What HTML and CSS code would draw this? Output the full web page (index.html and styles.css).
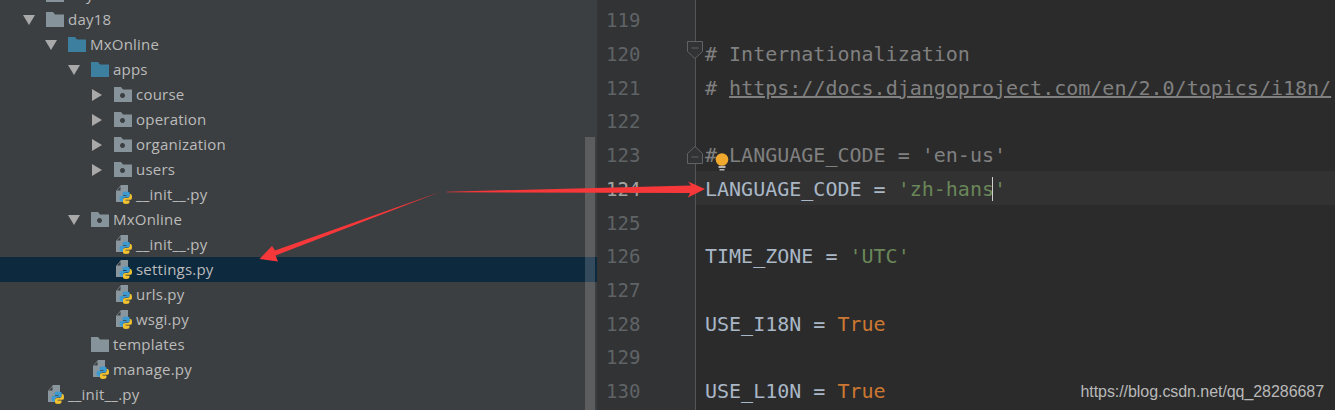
FILE: index.html
```html
<!DOCTYPE html>
<html lang="en">
<head>
<meta charset="utf-8">
<title>settings.py</title>
<link rel="stylesheet" href="styles.css">
</head>
<body>
<svg class="defs" width="0" height="0" aria-hidden="true">
  <symbol id="folder" viewBox="0 0 18 16"><path d="M0 1h7l2 2.500h9V16H0z"/></symbol>
  <symbol id="package" viewBox="0 0 18 16"><path fill-rule="evenodd" d="M0 1h7l2 2.500h9V16H0zM8.500 7a2.500 2.500 0 1 0 .01 0z"/></symbol>
  <symbol id="py" viewBox="0 0 16 19">
    <path fill="#8a969d" d="M0 6 5 0h7v7H7v10H0z"/>
    <path fill="#3c3f41" d="M1 5.500 4.500 1.500v4z"/>
    <path fill="#3d9ad1" d="M10 6.500c-2.500 0-3.500.8-3.500 2V10H10.500v.8H5.500C4.200 10.800 3.500 12 3.500 13.500s.7 3 2 3H7v-1.800c0-1.200 1-2.200 2.300-2.200h2.700c1 0 1.800-.8 1.800-1.800V8.500c0-1.200-1.300-2-3.800-2z"/>
    <path fill="#f2c12e" d="M10 19c2.500 0 3.500-.8 3.500-2v-1.500H9.500v-.8h5c1.300 0 1.500-1.200 1.500-2.700s-.4-3-1.500-3H13.800v1.800c0 1.200-1 2.200-2.300 2.200H9c-1 0-2 .8-2 1.800V17c0 1.200.5 2 3 2z"/>
  </symbol>
  <symbol id="open" viewBox="0 0 12 12"><path d="M0 1h12L6 11z"/></symbol>
  <symbol id="closed" viewBox="0 0 12 12"><path d="M1 0l10 6L1 12z"/></symbol>
</svg>

<div class="window">
  <aside class="tree">
    <div class="row l1"><i class="arrow"></i><svg class="ico gray"><use href="#folder"/></svg><span>day17</span></div>
    <div class="row l1"><svg class="arrow"><use href="#open"/></svg><svg class="ico gray"><use href="#folder"/></svg><span>day18</span></div>
    <div class="row l2"><svg class="arrow"><use href="#open"/></svg><svg class="ico blue"><use href="#folder"/></svg><span>MxOnline</span></div>
    <div class="row l3"><svg class="arrow"><use href="#open"/></svg><svg class="ico blue"><use href="#folder"/></svg><span>apps</span></div>
    <div class="row l4"><svg class="arrow"><use href="#closed"/></svg><svg class="ico gray"><use href="#package"/></svg><span>course</span></div>
    <div class="row l4"><svg class="arrow"><use href="#closed"/></svg><svg class="ico gray"><use href="#package"/></svg><span>operation</span></div>
    <div class="row l4"><svg class="arrow"><use href="#closed"/></svg><svg class="ico gray"><use href="#package"/></svg><span>organization</span></div>
    <div class="row l4"><svg class="arrow"><use href="#closed"/></svg><svg class="ico gray"><use href="#package"/></svg><span>users</span></div>
    <div class="row l4"><i class="arrow"></i><svg class="file"><use href="#py"/></svg><span>__init__.py</span></div>
    <div class="row l3"><svg class="arrow"><use href="#open"/></svg><svg class="ico gray"><use href="#package"/></svg><span>MxOnline</span></div>
    <div class="row l4"><i class="arrow"></i><svg class="file"><use href="#py"/></svg><span>__init__.py</span></div>
    <div class="row l4 selected"><i class="arrow"></i><svg class="file"><use href="#py"/></svg><span>settings.py</span></div>
    <div class="row l4"><i class="arrow"></i><svg class="file"><use href="#py"/></svg><span>urls.py</span></div>
    <div class="row l4"><i class="arrow"></i><svg class="file"><use href="#py"/></svg><span>wsgi.py</span></div>
    <div class="row l3"><i class="arrow"></i><svg class="ico gray"><use href="#folder"/></svg><span>templates</span></div>
    <div class="row l3"><i class="arrow"></i><svg class="file"><use href="#py"/></svg><span>manage.py</span></div>
    <div class="row l1b"><i class="arrow"></i><svg class="file"><use href="#py"/></svg><span>__init__.py</span></div>
    <div class="thumb"></div>
  </aside>

  <div class="gutter">
    <div class="num">119</div>
    <div class="num">120<svg class="fold fold-start" viewBox="0 0 16 18"><path d="M.5.500h15v10L8 17.500.5 10.500z"/><path d="M4.500 7h7"/></svg></div>
    <div class="num">121</div>
    <div class="num">122</div>
    <div class="num">123<svg class="fold fold-end" viewBox="0 0 16 18"><path d="M.5 17.500h15v-10L8 .5.500 7.500z"/><path d="M4.500 11h7"/></svg></div>
    <div class="num current">124</div>
    <div class="num">125</div>
    <div class="num">126</div>
    <div class="num">127</div>
    <div class="num">128</div>
    <div class="num">129</div>
    <div class="num">130</div>
  </div>

  <main class="code">
    <div class="line"></div>
    <div class="line cm"># Internationalization</div>
    <div class="line cm"># <u>https://docs.djangoproject.com/en/2.0/topics/i18n/</u></div>
    <div class="line"></div>
    <div class="line cm"># LANGUAGE_CODE = 'en-us'</div>
    <div class="line active">LANGUAGE_CODE = <b>'zh-hans'</b><i class="caret"></i></div>
    <div class="line"></div>
    <div class="line">TIME_ZONE = <b>'UTC'</b></div>
    <div class="line"></div>
    <div class="line">USE_I18N = <em>True</em></div>
    <div class="line"></div>
    <div class="line">USE_L10N = <em>True</em></div>
  </main>
</div>

<svg class="bulb" viewBox="0 0 14 20">
  <circle cx="7" cy="6.500" r="6.300" fill="#f0a92c"/>
  <path d="M3.500 13h7v2h-7zM4.500 16h5v1.500h-5z" fill="#b4b4b4"/>
</svg>

<svg class="arrows" viewBox="0 0 1335 410">
  <path d="M447 191.700 691 185.500 688 181.500 705 189 688 197.500 690 193 447 192.300z"/>
  <path d="M440 192 275 250.500 272 246 259.500 259 278 261.500 275.500 255.500z"/>
</svg>

<div class="mark">https://blog.csdn.net/qq_28286687</div>
</body>
</html>
```
FILE: styles.css
```css
* { box-sizing: border-box; }
html, body { margin: 0; height: 410px; overflow: hidden; background: #2b2b2b; }
.defs { position: absolute; }

.window { display: flex; height: 410px; }

.tree {
  position: relative;
  width: 597px;
  flex: none;
  background: #3c3f41;
  color: #bbbbbb;
  font: 15px/25px "Open Sans", "Noto Sans", sans-serif;
  overflow: hidden;
}
.tree .row:first-child { margin-top: -18px; }
.row {
  display: flex;
  align-items: center;
  height: 25px;
  white-space: nowrap;
}
.row span { margin-left: 4px; letter-spacing: 0.22px; }
.l1, .l1b { padding-left: 23px; }
.l2 { padding-left: 45px; }
.l3 { padding-left: 68px; }
.l4 { padding-left: 91px; }
.selected { background: #0d293e; }
.arrow {
  display: block;
  flex: none;
  width: 12px;
  height: 12px;
  margin-right: 11px;
  fill: #a9a9a9;
}
.ico { flex: none; width: 18px; height: 16px; margin-top: -1px; }
.file { flex: none; width: 16px; height: 19px; margin: 0 0 0 2px; }
.gray { fill: #87939a; }
.blue { fill: #3d7f9e; }
.thumb {
  position: absolute;
  top: 137px;
  right: 2px;
  bottom: 0;
  width: 10px;
  background: rgba(255, 255, 255, 0.16);
}

.gutter {
  flex: none;
  width: 99px;
  padding-top: 4.4px;
  background: #313335;
  border-right: 1px solid #555555;
  color: #606366;
  font: 19px/33.7px "DejaVu Sans Mono", monospace;
}
.num { position: relative; height: 33.7px; padding-left: 9px; }
.num.current { color: #a4a3a3; }
.fold {
  position: absolute;
  right: -8px;
  width: 16px;
  height: 18px;
  fill: #313335;
  stroke: #606366;
  stroke-width: 1;
}
.fold-start { top: 3px; }
.fold-end { top: 7px; }

.code {
  flex: 1;
  isolation: isolate;
  padding-top: 4.4px;
  color: #a9b7c6;
  font: 20px/33.7px "DejaVu Sans Mono", monospace;
  overflow: hidden;
}
.line { position: relative; height: 33.7px; padding-left: 9px; white-space: pre; }
.active::before {
  content: "";
  position: absolute;
  z-index: -1;
  left: 0;
  right: 0;
  top: -2px;
  height: 34px;
  background: #323232;
}
.cm { color: #808080; }
.line b { font-weight: 400; color: #6a8759; }
.line em { font-style: normal; color: #cc7832; }
.caret {
  display: inline-block;
  width: 0;
  height: 24px;
  margin-left: -14px;
  vertical-align: -5px;
  border-left: 1px solid #d0d0d0;
}

.bulb { position: absolute; left: 715px; top: 153px; width: 14px; height: 20px; }
.arrows {
  position: absolute;
  left: 0;
  top: 0;
  width: 1335px;
  height: 410px;
  fill: #f6383a;
  pointer-events: none;
}
.mark {
  position: absolute;
  right: 11px;
  top: 382px;
  color: #b9b9b9;
  font: 16px/20px "Liberation Sans", Arial, sans-serif;
  letter-spacing: -0.06px;
}
```
